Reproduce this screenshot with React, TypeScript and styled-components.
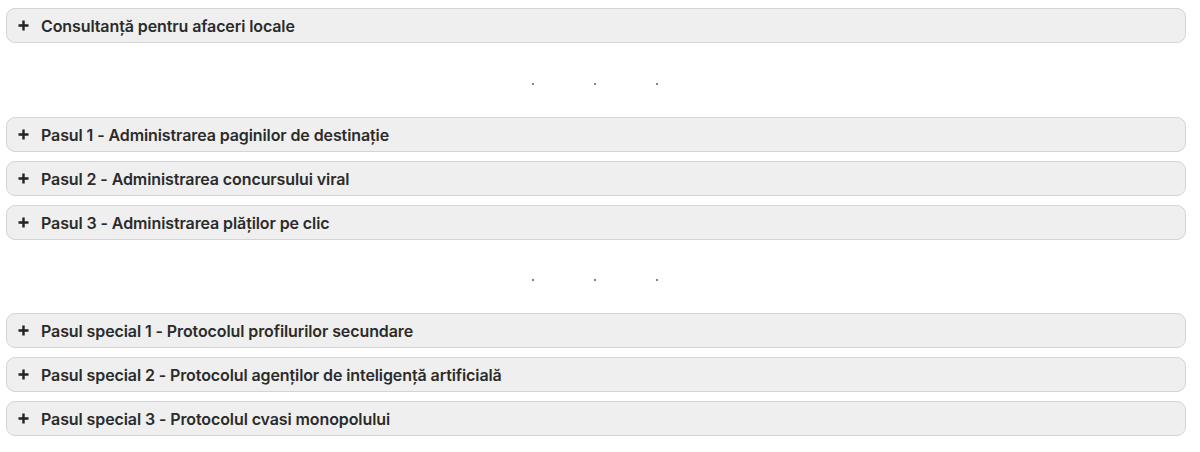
import styled, { createGlobalStyle } from 'styled-components'

const GlobalStyle = createGlobalStyle`
  body {
    margin: 0;
    background: #ffffff;
    font-family: Inter, 'Noto Sans', sans-serif;
  }
`

const groups: string[][] = [
  ['Consultanță pentru afaceri locale'],
  [
    'Pasul 1 - Administrarea paginilor de destinație',
    'Pasul 2 - Administrarea concursului viral',
    'Pasul 3 - Administrarea plăților pe clic',
  ],
  [
    'Pasul special 1 - Protocolul profilurilor secundare',
    'Pasul special 2 - Protocolul agenților de inteligență artificială',
    'Pasul special 3 - Protocolul cvasi monopolului',
  ],
]

const PlusIcon = () => (
  <svg width="11" height="11" viewBox="0 0 11 11" aria-hidden="true">
    <path d="M5.5 0.5v10M0.5 5.5h10" stroke="#222" strokeWidth="2.4" />
  </svg>
)

export default function App() {
  return (
    <>
      <GlobalStyle />
      <Page>
        {groups.map((items, gi) => (
          <Group key={gi}>
            {gi > 0 && (
              <Divider $top={gi === 1 ? 40 : 39}>
                <Dot />
                <Dot />
                <Dot />
              </Divider>
            )}
            <List>
              {items.map((title) => (
                <Item key={title}>
                  <Header>
                    <PlusIcon />
                    <Label>{title}</Label>
                  </Header>
                </Item>
              ))}
            </List>
          </Group>
        ))}
      </Page>
    </>
  )
}

const Page = styled.div`
  padding: 8px 14px 0 6px;
  display: flex;
  flex-direction: column;
`

const Group = styled.section`
  display: flex;
  flex-direction: column;
`

const List = styled.div`
  display: flex;
  flex-direction: column;
  gap: 9px;
`

const Divider = styled.div<{ $top: number }>`
  height: ${(p) => (p.$top === 40 ? 74 : 73)}px;
  box-sizing: border-box;
  padding: ${(p) => p.$top}px 2px 0 0;
  display: flex;
  justify-content: center;
  align-items: flex-start;
  gap: 60px;
`

const Dot = styled.span`
  width: 2px;
  height: 2px;
  border-radius: 50%;
  background: #5a5f66;
`

const Item = styled.div`
  background: #efefef;
  border: 1px solid #d4d4d4;
  border-radius: 9px;
`

const Header = styled.div`
  height: 33px;
  display: flex;
  align-items: center;
  gap: 12px;
  padding: 0 11px;
`

const Label = styled.span`
  font-size: 16px;
  font-weight: 600;
  color: #2b2b2b;
  letter-spacing: -0.1px;
`
